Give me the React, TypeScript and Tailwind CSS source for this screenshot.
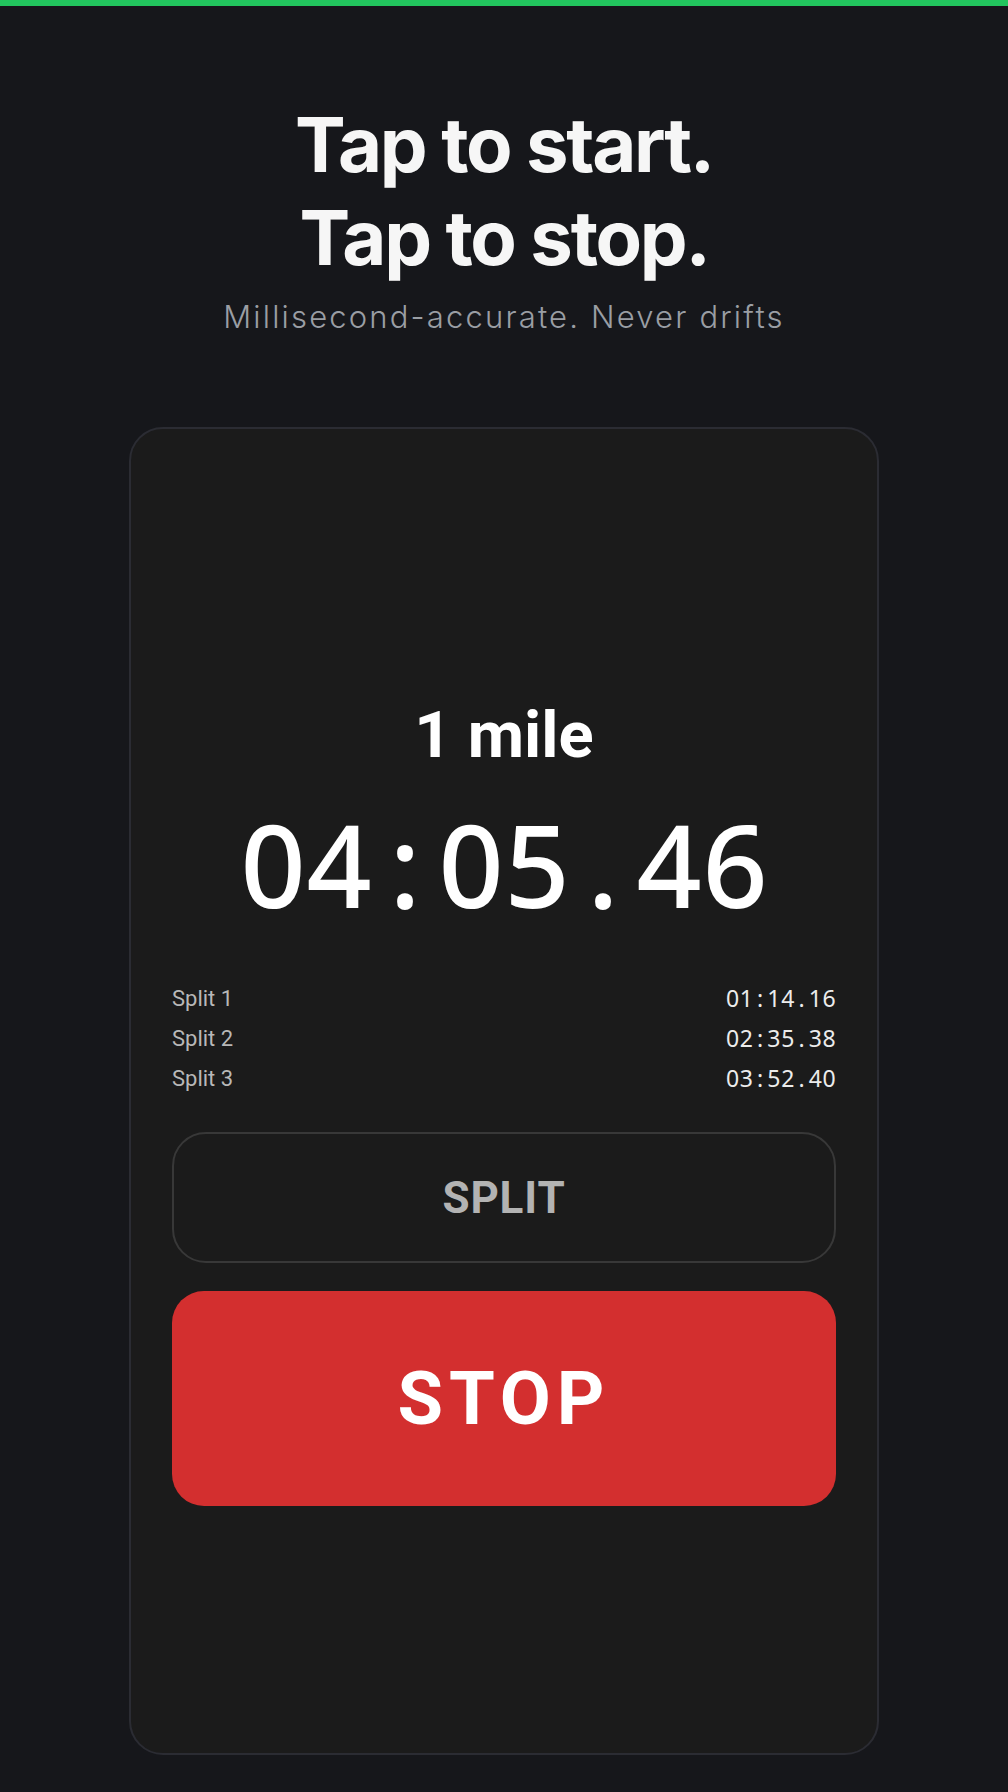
const SPLITS = [
  { label: "Split 1", time: "01:14.16" },
  { label: "Split 2", time: "02:35.38" },
  { label: "Split 3", time: "03:52.40" },
]

// fixed cells so digits, colon and dot all take the same width (mono look, plain zero)
function Digits({ value, cell }: { value: string; cell: string }) {
  return (
    <span className="inline-flex">
      {value.split("").map((ch, i) => (
        <span key={i} className={`${cell} inline-block text-center`}>
          {ch}
        </span>
      ))}
    </span>
  )
}

export default function App() {
  return (
    <div className="min-h-screen w-full bg-[#16171b] pb-[37px]">
      <div className="h-[6px] w-full bg-[#22c55e]" />

      <header className="flex flex-col items-center pt-[92px] text-center">
        <h1 className="font-['Inter',sans-serif] text-[76px] font-bold leading-[93px] tracking-[-0.03em] text-[#f6f6f6]">
          Tap to start.
          <br />
          Tap to stop.
        </h1>
        <p className="mt-[14px] font-['Inter',sans-serif] text-[31px] font-light leading-[38px] tracking-[0.07em] text-[#9a9ea4]">
          Millisecond-accurate. Never drifts
        </p>
      </header>

      <main className="mx-auto mt-[91px] flex h-[1328px] w-[750px] flex-col rounded-[34px] border-2 border-[#2b2c33] bg-[#1b1b1b] px-[41px] pt-[268px]">
        <div className="text-center font-['Roboto',sans-serif] text-[65px] font-bold leading-[76px] text-white">1 mile</div>
        <div className="mt-[26px] flex justify-center font-['Noto_Sans',sans-serif] text-[114px] font-medium leading-[130px] text-white">
          <Digits value="04:05.46" cell="w-[66px]" />
        </div>

        <ul className="mt-[50px] flex flex-col">
          {SPLITS.map((split) => (
            <li key={split.label} className="flex h-[40px] items-center justify-between leading-[40px]">
              <span className="font-['Roboto',sans-serif] text-[22px] text-[#b8b8b8]">{split.label}</span>
              <span className="-mt-[3px] font-['Noto_Sans',sans-serif] text-[23px] text-[#ececec]">
                <Digits value={split.time} cell="w-[13.8px]" />
              </span>
            </li>
          ))}
        </ul>

        <button
          type="button"
          className="mt-[33px] flex h-[131px] w-full items-center justify-center rounded-[34px] border-2 border-[#383838] bg-[#1b1b1b] font-['Roboto',sans-serif] text-[44px] font-bold tracking-[0.02em] text-[#b3b3b3]"
        >
          SPLIT
        </button>
        <button
          type="button"
          className="mt-[28px] flex h-[215px] w-full items-center justify-center rounded-[32px] bg-[#d32f2f] font-['Roboto',sans-serif] text-[74px] font-bold tracking-[0.08em] text-white"
        >
          STOP
        </button>
      </main>
    </div>
  )
}
